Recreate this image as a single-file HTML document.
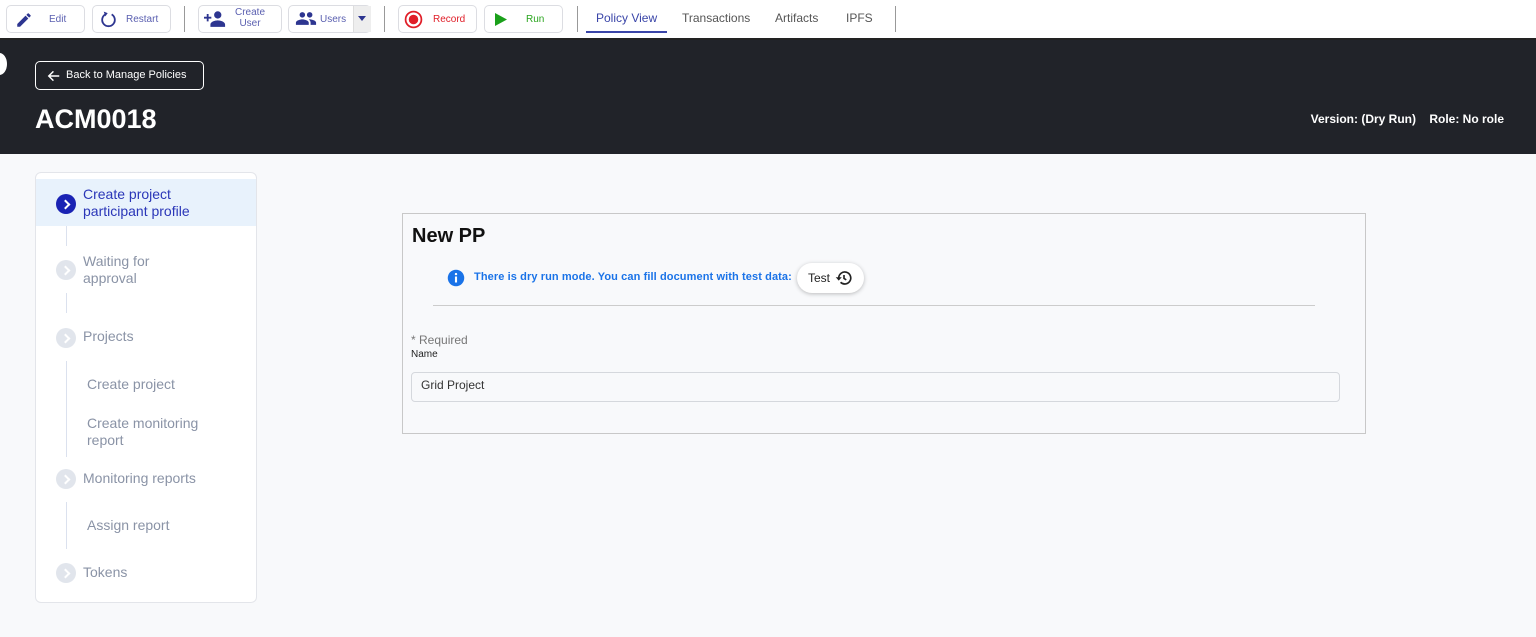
<!DOCTYPE html>
<html><head><meta charset="utf-8"><style>
*{box-sizing:border-box;margin:0;padding:0}
body{width:1536px;height:637px;overflow:hidden;background:#f8f9fb;font-family:"Liberation Sans",Arial,sans-serif;position:relative}
.top{position:absolute;left:0;top:0;width:1536px;height:40px;background:#fff;border-bottom:2px solid #222}
.btn{position:absolute;top:5px;height:28px;border:1px solid #dcdde2;border-radius:5px;background:#fff;font-size:10px;color:#5a5fb0;display:flex;align-items:center}
.btn svg{position:absolute}
.btn span{position:absolute;text-align:center;line-height:11px}
.sep{position:absolute;top:6px;width:1px;height:26px;background:#999}
.tab{position:absolute;top:11px;font-size:12px;color:#555}
.dark{position:absolute;left:0;top:40px;width:1536px;height:114px;background:#212329}
.back{position:absolute;left:35px;top:61px;width:169px;height:29px;border:1px solid #fff;border-radius:5px;color:#fff;font-size:11px;line-height:27px;padding-left:30px}
.side{position:absolute;left:35px;top:172px;width:222px;height:431px;background:#fff;border:1px solid #e3e5ea;border-radius:6px}
.it{position:absolute;left:47px;font-size:14px;color:#8a93a6;line-height:17px}
.circ{position:absolute;left:20px;width:20px;height:20px;border-radius:50%;background:#e1e5ec}
.circ::after{content:"";position:absolute;left:6px;top:7px;width:5px;height:5px;border-right:2px solid #fff;border-top:2px solid #fff;transform:rotate(45deg)}
.vl{position:absolute;left:30px;width:1px;background:#dbe1ee}
.sub{position:absolute;left:51px;font-size:14px;color:#8a93a6;line-height:17px}
.card{position:absolute;left:402px;top:213px;width:964px;height:221px;border:1px solid #c8c8c8;background:#f8f9fb}
</style></head><body>
<div class="top">
 <div class="btn" style="left:6px;width:79px"><svg style="left:8px;top:5px" width="18" height="18" viewBox="0 0 24 24"><path fill="#2d3590" d="M3 17.25V21h3.75L17.8 9.94l-3.75-3.75zM20.7 7.04a1 1 0 000-1.41l-2.34-2.34a1 1 0 00-1.41 0l-1.83 1.83 3.75 3.75z"/></svg><span style="left:42px">Edit</span></div>
 <div class="btn" style="left:92px;width:79px"><svg style="left:6px;top:4px" width="19" height="19" viewBox="0 0 24 24"><path fill="none" stroke="#2d3590" stroke-width="2.3" d="M8 5.5A8 8 0 1 0 16 5.5"/><path fill="#2d3590" d="M6 2l5 2-3 4z"/></svg><span style="left:33px">Restart</span></div>
 <div class="sep" style="left:184px"></div>
 <div class="btn" style="left:198px;width:84px"><svg style="left:5px;top:4px" width="22" height="19" viewBox="0 0 24 20"><path fill="#2d3590" d="M15 9a4 4 0 100-8 4 4 0 000 8zm0 2c-3 0-8 1.5-8 4.5V18h16v-2.5c0-3-5-4.5-8-4.5zM5 7V4H3v3H0v2h3v3h2V9h3V7z"/></svg><span style="left:36px;top:1px">Create<br>User</span></div>
 <div class="btn" style="left:288px;width:83px"><svg style="left:6px;top:5px" width="22" height="15" viewBox="0 0 24 16"><path fill="#2d3590" d="M16 7a3 3 0 100-6 3 3 0 000 6zM8 7a3 3 0 100-6 3 3 0 000 6zm0 2c-2.3 0-7 1.2-7 3.5V15h14v-2.5C15 10.2 10.3 9 8 9zm8 0c-.3 0-.6 0-1 .1 1.2.8 2 2 2 3.4V15h6v-2.5C23 10.2 18.3 9 16 9z"/></svg><span style="left:31px">Users</span><div style="position:absolute;left:64px;top:0;width:18px;height:26px;background:#eee;border-left:1px solid #ddd"></div><div style="position:absolute;left:69px;top:10px;border:4px solid transparent;border-top:5px solid #2d3590"></div></div>
 <div class="sep" style="left:384px"></div>
 <div class="btn" style="left:398px;width:79px;color:#e01e28"><svg style="left:5px;top:4px" width="19" height="19" viewBox="0 0 24 24"><circle cx="12" cy="12" r="10" fill="none" stroke="#e01e28" stroke-width="2.2"/><circle cx="12" cy="12" r="6" fill="#e01e28"/></svg><span style="left:34px">Record</span></div>
 <div class="btn" style="left:484px;width:79px;color:#2aa51e"><svg style="left:10px;top:7px" width="12" height="13" viewBox="0 0 12 13"><path fill="#1aa01a" d="M0 0l12 6.5L0 13z"/></svg><span style="left:41px">Run</span></div>
 <div class="sep" style="left:577px"></div>
 <div class="tab" style="left:596px;color:#3a45a8">Policy View</div>
 <div style="position:absolute;left:586px;top:31px;width:81px;height:2px;background:#3a45a8"></div>
 <div class="tab" style="left:682px">Transactions</div>
 <div class="tab" style="left:775px">Artifacts</div>
 <div class="tab" style="left:846px">IPFS</div>
 <div class="sep" style="left:895px"></div>
</div>
<div class="dark">
 <div style="position:absolute;left:-8px;top:13px;width:15px;height:22px;border-radius:50%;background:#fff"></div>
 <div style="position:absolute;left:35px;top:64px;color:#fff;font-size:27px;font-weight:bold">ACM0018</div>
 <div style="position:absolute;right:32px;top:72px;color:#fff;font-size:12px;font-weight:bold">Version: (Dry Run)&nbsp;&nbsp;&nbsp;&nbsp;Role: No role</div>
</div>
<div class="back"><svg style="position:absolute;left:11px;top:7px" width="14" height="14" viewBox="0 0 24 24"><path fill="none" stroke="#fff" stroke-width="2.5" d="M21 12H4M11 4l-8 8 8 8"/></svg>Back to Manage Policies</div>
<div class="side">
 <div style="position:absolute;left:0;top:6px;width:220px;height:47px;background:#e8f2fc"></div>
 <div class="circ" style="top:21px;background:#1a23b4"></div>
 <div class="it" style="top:13px;color:#2a36b8">Create project<br>participant profile</div>
 <div class="vl" style="top:53px;height:20px"></div>
 <div class="circ" style="top:87px"></div>
 <div class="it" style="top:80px">Waiting for<br>approval</div>
 <div class="vl" style="top:120px;height:20px"></div>
 <div class="circ" style="top:155px"></div>
 <div class="it" style="top:155px">Projects</div>
 <div class="vl" style="top:188px;height:96px"></div>
 <div class="sub" style="top:203px">Create project</div>
 <div class="sub" style="top:242px">Create monitoring<br>report</div>
 <div class="circ" style="top:296px"></div>
 <div class="it" style="top:297px">Monitoring reports</div>
 <div class="vl" style="top:329px;height:47px"></div>
 <div class="sub" style="top:344px">Assign report</div>
 <div class="circ" style="top:390px"></div>
 <div class="it" style="top:391px">Tokens</div>
</div>
<div class="card">
 <div style="position:absolute;left:9px;top:11px;font-size:20px;font-weight:bold;color:#111">New PP</div>
 <svg style="position:absolute;left:44px;top:55px" width="18" height="18" viewBox="0 0 24 24"><circle cx="12" cy="12" r="11" fill="#1a73e8"/><rect x="10.6" y="10" width="2.8" height="8" fill="#fff"/><circle cx="12" cy="6.8" r="1.6" fill="#fff"/></svg>
 <div style="position:absolute;left:71px;top:57px;font-size:11px;font-weight:bold;color:#1a73e8;letter-spacing:0.1px">There is dry run mode. You can fill document with test data:</div>
 <div style="position:absolute;left:394px;top:49px;width:67px;height:30px;background:#fff;border-radius:15px;box-shadow:0 1px 4px rgba(0,0,0,.25);font-size:12px;color:#222;line-height:30px;padding-left:11px">Test<svg style="position:absolute;left:38px;top:6px" width="18" height="18" viewBox="0 0 24 24"><path fill="none" stroke="#222" stroke-width="2.2" d="M5 12a8 8 0 1 1 2.4 5.7M12 8v4.5l3 2"/><path fill="#222" d="M1 11h8l-4 4.5z"/></svg></div>
 <div style="position:absolute;left:30px;top:91px;width:882px;height:1px;background:#ccc"></div>
 <div style="position:absolute;left:8px;top:119px;font-size:12px;color:#777">* Required</div>
 <div style="position:absolute;left:8px;top:135px;font-size:10px;color:#222">Name</div>
 <div style="position:absolute;left:8px;top:158px;width:929px;height:30px;border:1px solid #d5d8dd;border-radius:4px;background:#f8f9fb;font-size:12px;color:#333;line-height:24px;padding-left:9px">Grid Project</div>
</div>
</body></html>
